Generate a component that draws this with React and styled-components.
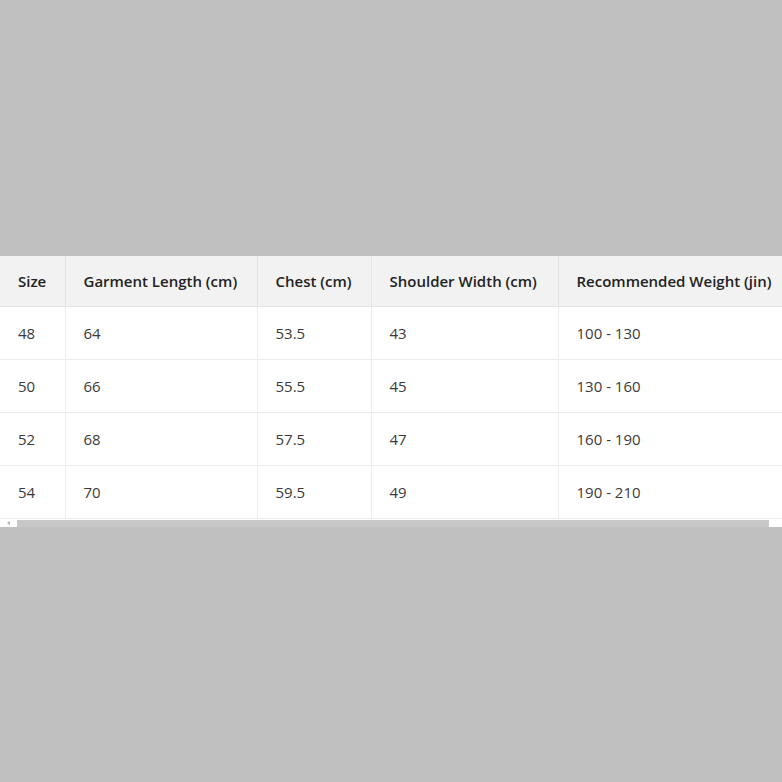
import React from "react";
import styled, { createGlobalStyle } from "styled-components";

const Global = createGlobalStyle`
  html, body { margin: 0; padding: 0; }
  body {
    background: #c0c0c0;
    font-family: "Open Sans", "Noto Sans", "Liberation Sans", sans-serif;
  }
`;

const Page = styled.div`
  min-height: 100vh;
  display: flex;
  align-items: center;
`;

const Panel = styled.div`
  width: 100%;
  background: #ffffff;
  display: flex;
  flex-direction: column;
`;

const Scroller = styled.div`
  width: 100%;
  overflow: hidden;
`;

const Table = styled.table`
  border-collapse: collapse;
  white-space: nowrap;
  font-size: 15px;
  line-height: 20px;
  table-layout: fixed;
  width: 794px;
`;

const Th = styled.th`
  box-sizing: border-box;
  width: ${(p) => p.$w}px;
  text-align: left;
  font-weight: 600;
  color: #222;
  background: #f2f2f2;
  padding: 15px 18px;
  border-bottom: 1px solid #e4e4e4;
  border-right: 1px solid #e4e4e4;
  &:last-child { border-right: none; }
`;

const Td = styled.td`
  text-align: left;
  color: #3a3a3a;
  padding: 16px 18px;
  border-bottom: 1px solid #ececec;
  border-right: 1px solid #ececec;
  &:last-child { border-right: none; }
`;

const ScrollTrack = styled.div`
  height: 8px;
  display: flex;
  align-items: stretch;
  background: #ffffff;
`;

const ScrollButton = styled.div`
  width: ${(p) => p.$w}px;
  display: flex;
  align-items: center;
  justify-content: center;
`;

const Arrow = styled.span`
  width: 0;
  height: 0;
  border-top: 2px solid transparent;
  border-bottom: 2px solid transparent;
  border-right: 3px solid #b0b0b0;
`;

const Thumb = styled.div`
  flex: 1;
  background: #c8c8c8;
  margin-top: 1px;
`;

const headers = [
  ["Size", 65],
  ["Garment Length (cm)", 192],
  ["Chest (cm)", 114],
  ["Shoulder Width (cm)", 187],
  ["Recommended Weight (jin)", 236],
];
const rows = [
  ["48", "64", "53.5", "43", "100 - 130"],
  ["50", "66", "55.5", "45", "130 - 160"],
  ["52", "68", "57.5", "47", "160 - 190"],
  ["54", "70", "59.5", "49", "190 - 210"],
];

export default function App() {
  return (
    <>
      <Global />
      <Page>
        <Panel>
          <Scroller>
            <Table>
              <thead>
                <tr>
                  {headers.map(([h, w]) => (
                    <Th key={h} $w={w}>{h}</Th>
                  ))}
                </tr>
              </thead>
              <tbody>
                {rows.map((r) => (
                  <tr key={r[0]}>
                    {r.map((c, i) => (
                      <Td key={i}>{c}</Td>
                    ))}
                  </tr>
                ))}
              </tbody>
            </Table>
          </Scroller>
          <ScrollTrack>
            <ScrollButton $w={17}>
              <Arrow />
            </ScrollButton>
            <Thumb />
            <ScrollButton $w={13} />
          </ScrollTrack>
        </Panel>
      </Page>
    </>
  );
}
